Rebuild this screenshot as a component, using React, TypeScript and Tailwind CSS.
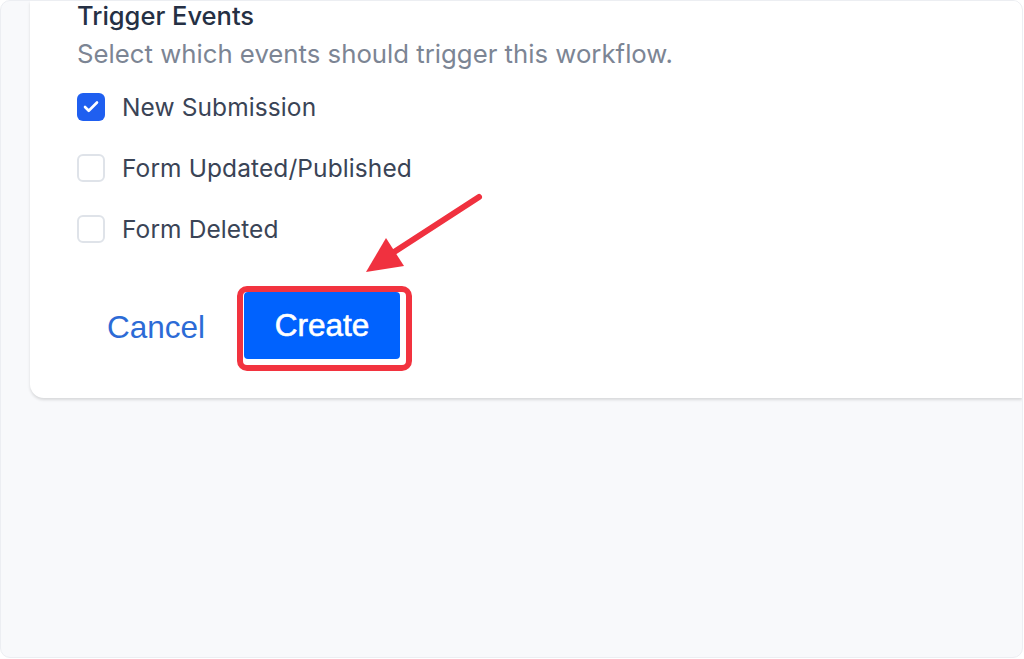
import { Check } from "lucide-react";

const events = [
  { label: "New Submission", checked: true },
  { label: "Form Updated/Published", checked: false },
  { label: "Form Deleted", checked: false },
];

function EventRow({ label, checked }: { label: string; checked: boolean }) {
  return (
    <label className="flex items-center gap-[17px] h-[28px]">
      {checked ? (
        <span className="w-[28px] h-[28px] rounded-[6px] bg-[#1f5ff0] flex items-center justify-center">
          <Check className="w-[18px] h-[18px] text-white" strokeWidth={3.5} />
        </span>
      ) : (
        <span className="w-[28px] h-[28px] rounded-[6px] border-2 border-[#dfe3e9] bg-white" />
      )}
      <span className="text-[24.5px] text-[#3a4456] leading-[28px] tracking-[0.1px]">{label}</span>
    </label>
  );
}

export default function App() {
  return (
    <div className="w-[1024px] h-[659px] bg-white font-['Inter',sans-serif]">
      <div className="relative w-[1023px] h-[658px] rounded-[10px] border border-[#eceef2] bg-[#f8f9fb] overflow-hidden pl-[29px]">
        <div className="h-[397px] bg-white rounded-bl-[14px] shadow-[0_2px_3px_rgba(0,0,0,0.13)] pl-[47px]">
          <h3 className="text-[25.5px] font-medium text-[#253044] leading-[30px]">Trigger Events</h3>
          <p className="text-[25.75px] text-[#7c8594] leading-[30px] mt-[8px]">
            Select which events should trigger this workflow.
          </p>

          <div className="flex flex-col gap-[33px] mt-[24px]">
            {events.map((e) => (
              <EventRow key={e.label} label={e.label} checked={e.checked} />
            ))}
          </div>

          <div className="flex items-center mt-[43px] ml-[30px] gap-[32px] font-['Liberation_Sans',Arial,sans-serif]">
            <button className="text-[31.5px] text-[#2c6bd6] leading-none mt-[-2px]">Cancel</button>
            <div className="rounded-[10px] border-[6px] border-[#f2333f] pl-[1px] pr-[6px] pb-[6px] bg-white">
              <button className="w-[156px] h-[67px] rounded-[4px] bg-[#0062fe] text-white text-[31.5px] leading-none [-webkit-text-stroke:0.6px_white]">
                Create
              </button>
            </div>
          </div>
        </div>

        <svg className="absolute left-[360px] top-[190px]" width="130" height="90" viewBox="0 0 130 90">
          <line x1="118" y1="6" x2="30" y2="63" stroke="#f0313f" strokeWidth="6" strokeLinecap="round" />
          <polygon points="5,81 25,47 43,75" fill="#f0313f" />
        </svg>
      </div>
    </div>
  );
}
